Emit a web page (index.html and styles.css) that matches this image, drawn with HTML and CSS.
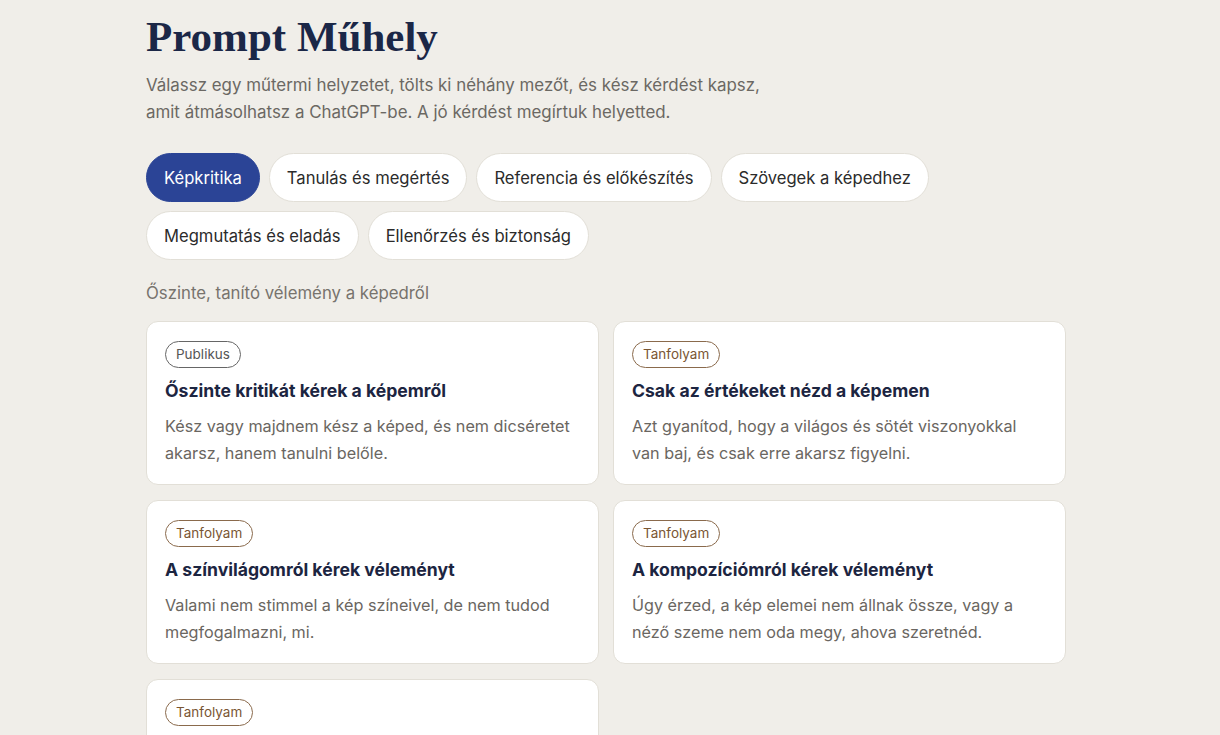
FILE: index.html
```html
<!DOCTYPE html>
<html lang="hu">
<head>
    <meta charset="UTF-8">
    <meta name="viewport" content="width=device-width, initial-scale=1.0">
    <title>Prompt Műhely</title>
    <link rel="stylesheet" href="styles.css">
</head>
<body>
    <div class="page">
        <h1>Prompt Műhely</h1>
        <p class="intro">Válassz egy műtermi helyzetet, tölts ki néhány mezőt, és kész kérdést kapsz,<br>amit átmásolhatsz a ChatGPT-be. A jó kérdést megírtuk helyetted.</p>

        <div class="tabs">
            <button class="tab active">Képkritika</button>
            <button class="tab">Tanulás és megértés</button>
            <button class="tab">Referencia és előkészítés</button>
            <button class="tab">Szövegek a képedhez</button>
            <button class="tab">Megmutatás és eladás</button>
            <button class="tab">Ellenőrzés és biztonság</button>
        </div>

        <p class="section-label">Őszinte, tanító vélemény a képedről</p>

        <div class="cards">
            <div class="card">
                <span class="badge public">Publikus</span>
                <h2>Őszinte kritikát kérek a képemről</h2>
                <p>Kész vagy majdnem kész a képed, és nem dicséretet akarsz, hanem tanulni belőle.</p>
            </div>
            <div class="card">
                <span class="badge course">Tanfolyam</span>
                <h2>Csak az értékeket nézd a képemen</h2>
                <p>Azt gyanítod, hogy a világos és sötét viszonyokkal van baj, és csak erre akarsz figyelni.</p>
            </div>
            <div class="card">
                <span class="badge course">Tanfolyam</span>
                <h2>A színvilágomról kérek véleményt</h2>
                <p>Valami nem stimmel a kép színeivel, de nem tudod megfogalmazni, mi.</p>
            </div>
            <div class="card">
                <span class="badge course">Tanfolyam</span>
                <h2>A kompozíciómról kérek véleményt</h2>
                <p>Úgy érzed, a kép elemei nem állnak össze, vagy a néző szeme nem oda megy, ahova szeretnéd.</p>
            </div>
            <div class="card">
                <span class="badge course">Tanfolyam</span>
                <h2>Az anatómiámról kérek véleményt</h2>
                <p>Az alakjaid valahogy nem állnak jól, és szeretnéd tudni, hol csúszik el.</p>
            </div>
        </div>
    </div>
</body>
</html>
```

FILE: styles.css
```css
body {
    margin: 0;
    font-family: Inter, "Noto Sans", sans-serif;
    background-color: #f0eee9;
    color: #1e2a48;
}

.page {
    width: 920px;
    margin-left: 146px;
    padding-top: 14px;
}

h1 {
    font-family: "Liberation Serif", serif;
    font-weight: 700;
    font-size: 43px;
    line-height: 46px;
    margin: 0 0 12px;
    color: #1b2747;
}

.intro {
    margin: 0 0 27px;
    font-size: 16.9px;
    line-height: 27px;
    color: #6b6863;
}

.tabs {
    display: flex;
    flex-wrap: wrap;
    gap: 9px 9px;
    width: 920px;
}

.tab {
    font-family: inherit;
    font-size: 16.6px;
    height: 49px;
    padding: 0 17px;
    border: 1px solid #e2dfd7;
    border-radius: 25px;
    background-color: #fff;
    color: #2b2b2b;
    cursor: pointer;
}

.tab.active {
    background-color: #2b4496;
    border-color: #2b4496;
    color: #fff;
}

.section-label {
    margin: 21px 0 16px;
    font-size: 16.8px;
    line-height: 24px;
    color: #77736d;
}

.cards {
    display: grid;
    grid-template-columns: 453px 453px;
    gap: 15px 14px;
}

.card {
    background-color: #fff;
    border: 1px solid #e2dfd7;
    border-radius: 12px;
    padding: 19px 18px 17px;
}

.badge {
    display: inline-block;
    font-size: 13.5px;
    line-height: 25px;
    padding: 0 10px;
    border: 1px solid;
    border-radius: 14px;
}

.badge.public {
    color: #555;
    border-color: #666;
}

.badge.course {
    color: #7a5633;
    border-color: #8a6a4c;
}

.card h2 {
    margin: 10px 0 9px;
    font-size: 17.6px;
    line-height: 26px;
    font-weight: 650;
    color: #1c2541;
}

.card p {
    margin: 0;
    font-size: 16.2px;
    line-height: 27px;
    color: #6a6661;
}
```
